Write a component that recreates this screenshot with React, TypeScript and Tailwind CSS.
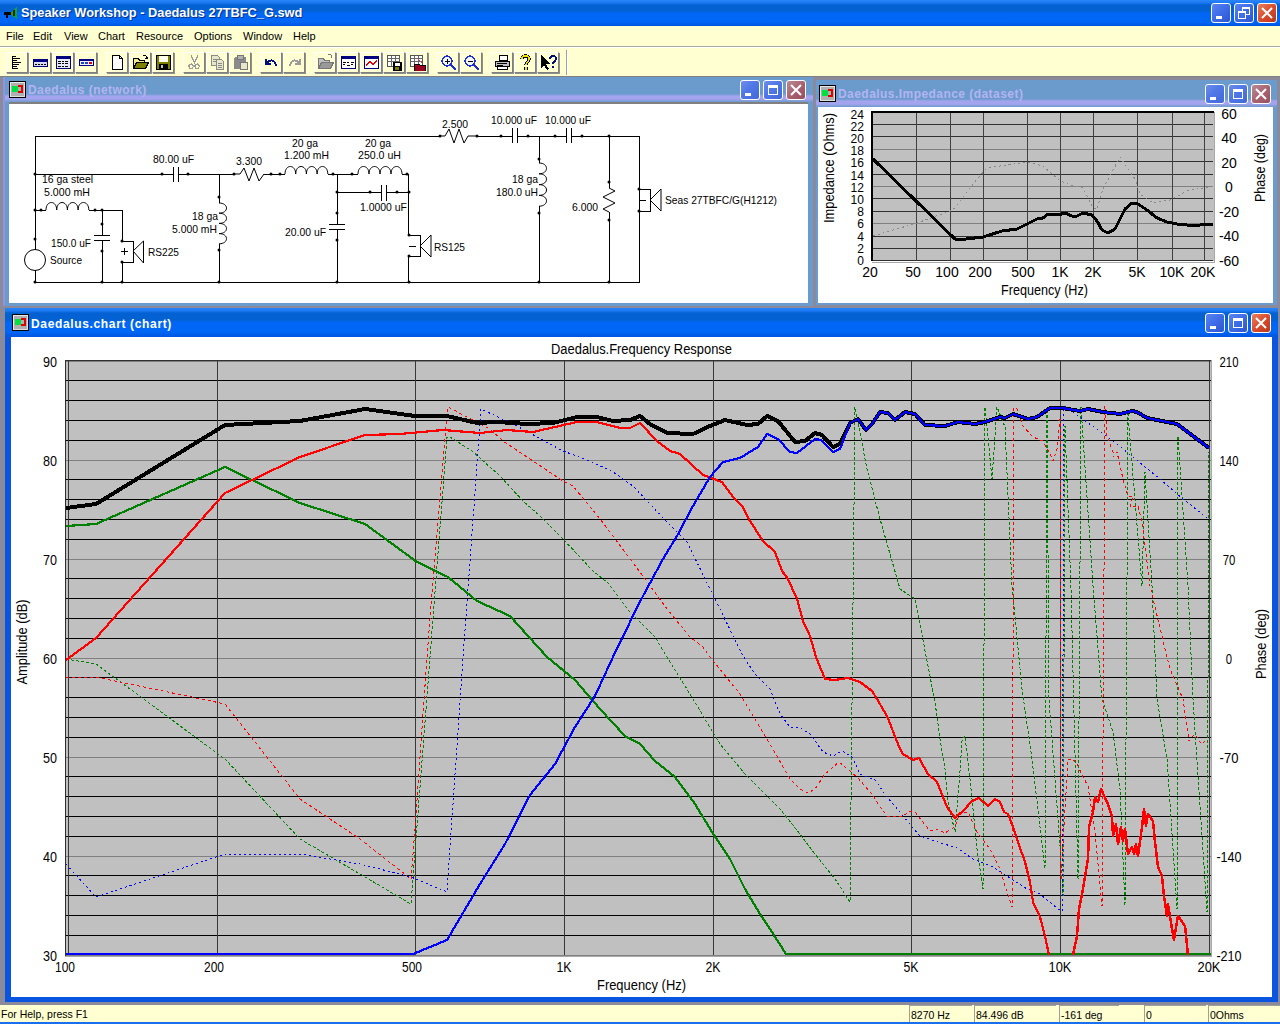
import React from "react";

type P = [number, number][];
const pts = (p: P) => p.map((a) => a.join(",")).join(" ");

function T({ x, y, w, s = 11, a = "start", r, c = "#000", children }: { x: number; y: number; w?: number; s?: number; a?: "start" | "middle" | "end"; r?: boolean; c?: string; children: string }) {
  return (
    <text
      x={r ? 0 : x}
      y={r ? 0 : y}
      transform={r ? `translate(${x},${y}) rotate(-90)` : undefined}
      fontSize={s}
      textAnchor={a}
      fill={c}
      textLength={w}
      lengthAdjust={w ? "spacingAndGlyphs" : undefined}
    >
      {children}
    </text>
  );
}

function Line({ p, c, w = 1, d }: { p: P; c: string; w?: number; d?: string }) {
  return <polyline points={pts(p)} fill="none" stroke={c} strokeWidth={w} strokeDasharray={d} strokeLinejoin="round" shapeRendering="crispEdges" />;
}

/* ------- window chrome ------- */
function CapBtn({ kind, active }: { kind: "min" | "max" | "rest" | "close"; active: boolean }) {
  const bg =
    kind === "close"
      ? active
        ? "bg-[linear-gradient(135deg,#e8805c,#d9482a_55%,#b5391f)]"
        : "bg-[linear-gradient(135deg,#b98a98,#a8606e_55%,#96505e)]"
      : active
        ? "bg-[linear-gradient(135deg,#5a84f0,#3f6ee8_45%,#2f55d0)]"
        : "bg-[linear-gradient(135deg,#6c8cec,#4f78e6_45%,#4468d8)]";
  return (
    <div className={`w-[20px] h-[20px] rounded-[3px] border border-white flex items-center justify-center shrink-0 ${bg}`}>
      <svg width="14" height="14" viewBox="0 0 14 14" shapeRendering="crispEdges">
        {kind === "min" && <rect x="2" y="10" width="6" height="3" fill="#fff" />}
        {kind === "max" && (
          <>
            <rect x="2.5" y="2.5" width="9" height="9" fill="none" stroke="#fff" />
            <rect x="2" y="2" width="10" height="3" fill="#fff" />
          </>
        )}
        {kind === "rest" && (
          <>
            <rect x="5.5" y="1.5" width="7" height="7" fill="none" stroke="#fff" />
            <rect x="5" y="1" width="8" height="2" fill="#fff" />
            <rect x="1.5" y="5.5" width="7" height="7" fill="#3f6ee8" stroke="#fff" />
            <rect x="1" y="5" width="8" height="2" fill="#fff" />
          </>
        )}
        {kind === "close" && <path d="M2 2 L12 12 M12 2 L2 12" stroke="#fff" strokeWidth="2" shapeRendering="auto" />}
      </svg>
    </div>
  );
}

function DocIcon() {
  return (
    <svg width="17" height="17" viewBox="0 0 17 17" className="shrink-0" shapeRendering="crispEdges">
      <rect x="0.5" y="0.5" width="16" height="16" fill="#c8c8c8" stroke="#000" />
      <rect x="1.5" y="1.5" width="14" height="14" fill="#b0b0b0" stroke="#fff" strokeWidth="0.6" />
      <rect x="3" y="5" width="6" height="6" fill="#00e040" />
      <path d="M9 5 H13 V11 H9" fill="none" stroke="#e00000" strokeWidth="1.5" />
    </svg>
  );
}

function Window({ title, active, shell, bar, client, barPad, track, children }: { title: string; active: boolean; shell: string; bar: string; client: string; barPad: string; track: string; children: React.ReactNode }) {
  return (
    <div className={`flex flex-col shrink-0 ${shell}`}>
      <div className={`flex items-center shrink-0 ${bar} ${barPad}`}>
        <DocIcon />
        <span className={`ml-[2px] flex-1 text-[12px] font-bold ${track} ${active ? "text-white" : "text-[#b4b4f2]"}`}>{title}</span>
        <div className="flex gap-[3px]">
          <CapBtn kind="min" active={active} />
          <CapBtn kind="max" active={active} />
          <CapBtn kind="close" active={active} />
        </div>
      </div>
      <div className={`flex-1 bg-white ${client}`}>{children}</div>
    </div>
  );
}

/* ------- toolbar icons ------- */
const D = "#000080";
const icons: Record<string, React.ReactNode> = {
  tree: <path d="M3.500 2v13M4 2h3M4 4h7M4 6h4M4 8h8M4 10h6M4 12h4M4 14h5" stroke="#000" fill="none" />,
  keys: (
    <>
      <rect x="1" y="5" width="15" height="8" fill={D} />
      <rect x="2" y="8" width="13" height="4" fill="#d8d8f0" />
      <path d="M3 10h2M6 10h2M9 10h2M12 10h2" stroke="#000" />
    </>
  ),
  grid: (
    <>
      <rect x="1" y="2" width="15" height="13" fill={D} />
      <rect x="2" y="5" width="13" height="9" fill="#e8e8f8" />
      <path d="M3 7h3M7 7h2M10 7h3M3 9h3M7 9h2M10 9h3M3 12h3M7 12h2M10 12h3" stroke="#000" />
    </>
  ),
  bars: (
    <>
      <rect x="1.500" y="5.500" width="14" height="6" fill="#f0f0f8" stroke={D} />
      <rect x="1" y="5" width="15" height="2" fill={D} />
      <rect x="3" y="8" width="3" height="2" fill="#2040d0" />
      <rect x="7" y="8" width="3" height="2" fill="#2040d0" />
      <rect x="11" y="8" width="3" height="2" fill="#e00000" />
    </>
  ),
  newdoc: <path d="M3.500 1.500h7l3 3v11h-10zM10.500 1.500v3h3" fill="#fff" stroke="#000" />,
  open: (
    <>
      <path d="M1.500 4.500h5l1 2h5v8h-11z" fill="#f0e890" stroke="#000" />
      <path d="M1.500 14.500l3-6h12l-3 6z" fill="#808000" stroke="#000" />
      <path d="M11 2c2-1 4 0 4 3M15 5l-2-1M15 5l1-2" stroke="#000" fill="none" />
    </>
  ),
  save: (
    <>
      <rect x="1.500" y="1.500" width="14" height="14" fill="#808000" stroke="#000" />
      <rect x="4" y="2" width="9" height="6" fill="#fffff0" />
      <rect x="4" y="10" width="9" height="5" fill="#000" />
      <rect x="6" y="11" width="2" height="3" fill="#c0c0c0" />
    </>
  ),
  cut: <path d="M5 1l4 9M12 1l-4 9M5 10a2.200 2.200 0 1 0 .1 0M11 10a2.200 2.200 0 1 0 .1 0" stroke="#9a9a9a" fill="none" strokeWidth="1.2" />,
  copy: (
    <>
      <path d="M2.500 1.500h6l2 2v8h-8z" fill="#e8e8c8" stroke="#8a8a8a" />
      <path d="M7.500 5.500h5l2 2v8h-7z" fill="#e8e8c8" stroke="#8a8a8a" />
      <path d="M4 5h4M4 7h3M9 9h4M9 11h4M9 13h4" stroke="#8a8a8a" />
    </>
  ),
  paste: (
    <>
      <rect x="2" y="3" width="12" height="12" rx="2" fill="#8a8a8a" />
      <rect x="5" y="1" width="6" height="4" fill="#b0b0b0" stroke="#777" />
      <rect x="8" y="8" width="7" height="7" fill="#e8e8c8" stroke="#777" />
    </>
  ),
  undo: <path d="M3 5v5h5M3 10C6 5 12 5 13 12" stroke="#00107a" strokeWidth="2" fill="none" />,
  redo: <path d="M14 5v5h-5M14 10C11 5 5 5 4 12" stroke="#9a9a9a" strokeWidth="2" fill="none" />,
  open2: (
    <>
      <path d="M1.500 4.500h5l1 2h5v8h-11z" fill="#c0c0c0" stroke="#777" />
      <path d="M1.500 14.500l3-6h12l-3 6z" fill="#999" stroke="#777" />
      <path d="M11 1c2-1 4 0 4 3" stroke="#777" fill="none" />
    </>
  ),
  prefs: (
    <>
      <rect x="1" y="2" width="15" height="13" fill={D} />
      <rect x="2" y="5" width="13" height="9" fill="#fff" />
      <path d="M3 8h3M3 10h2M7 8h2M7 11h3M11 8h3M11 10h2" stroke="#000" />
    </>
  ),
  wave: (
    <>
      <rect x="1" y="2" width="15" height="13" fill={D} />
      <rect x="2" y="5" width="13" height="9" fill="#fff" />
      <path d="M3 12l4-5 3 4 4-5" stroke="#e00000" fill="none" strokeWidth="1.2" />
    </>
  ),
  tsave: (
    <>
      <rect x="1.500" y="1.500" width="12" height="11" fill="#fff" stroke="#555" />
      <path d="M1 4h13M5 2v10M9 2v10M2 7h11" stroke="#666" />
      <rect x="7" y="8" width="9" height="9" fill="#000" />
      <rect x="9" y="9" width="5" height="3" fill="#fff" />
      <rect x="9" y="13" width="4" height="3" fill="#808000" />
    </>
  ),
  tfold: (
    <>
      <rect x="1.500" y="1.500" width="12" height="11" fill="#fff" stroke="#555" />
      <path d="M1 4h13M5 2v10M9 2v10M2 7h11" stroke="#666" />
      <path d="M5 10h5l1 1h5v6h-11z" fill="#a00020" stroke="#000" />
      <path d="M8 4l5 5" stroke="#e04060" />
    </>
  ),
  zin: (
    <>
      <circle cx="7" cy="7" r="5" fill="#f4f4ff" stroke="#2030d0" strokeWidth="1.4" />
      <path d="M4.500 7h5M7 4.500v5" stroke="#000" />
      <path d="M11 11l5 5" stroke="#2030d0" strokeWidth="2" />
    </>
  ),
  zout: (
    <>
      <circle cx="7" cy="7" r="5" fill="#f4f4ff" stroke="#2030d0" strokeWidth="1.4" />
      <path d="M4.500 7h5" stroke="#000" />
      <path d="M11 11l5 5" stroke="#2030d0" strokeWidth="2" />
    </>
  ),
  print: (
    <>
      <path d="M5.500 1.500h8v5h-8z" fill="#fff" stroke="#000" />
      <path d="M1.500 7.500h14v5h-14z" fill="#c0c0c0" stroke="#000" />
      <path d="M3.500 12.500h10v3h-10z" fill="#fff" stroke="#000" />
      <path d="M3 9h10M3 11h6" stroke="#000" />
    </>
  ),
  help: <path d="M5 5c0-4 7-4 7 0 0 3-3 3-3 6M9 13v3" stroke="#000" strokeWidth="3.4" fill="none" />,
  helpy: <path d="M5 5c0-4 7-4 7 0 0 3-3 3-3 6M9 13v3" stroke="#f0e000" strokeWidth="1.6" fill="none" />,
  arrow: (
    <>
      <path d="M1 1v13l3-3 3 5 2-1-3-5h4z" fill="#000" />
      <path d="M10 5c0-4 6-4 6 0 0 2-3 2-3 5M13 12v2" stroke="#00107a" strokeWidth="2" fill="none" />
    </>
  ),
};

function TB({ i }: { i: React.ReactNode }) {
  return (
    <div className="w-[22px] h-[21px] shrink-0 flex items-center justify-center border border-t-white border-l-white border-r-[#808080] border-b-[#808080] shadow-[1px_1px_0_#909088]">
      <svg width="17" height="17" viewBox="0 0 17 17" shapeRendering="crispEdges">
        {i}
      </svg>
    </div>
  );
}

function Toolbar() {
  const groups: React.ReactNode[][] = [
    [icons.tree, icons.keys, icons.grid, icons.bars],
    [icons.newdoc, icons.open, icons.save],
    [icons.cut, icons.copy, icons.paste],
    [icons.undo, icons.redo],
    [icons.open2, icons.prefs, icons.wave, icons.tsave, icons.tfold],
    [icons.zin, icons.zout],
    [icons.print, <>{icons.help}{icons.helpy}</>, icons.arrow],
  ];
  return (
    <div className="h-[28px] shrink-0 flex items-start pt-[4px] pl-[6px] bg-[#ffffd1]">
      <div className="flex gap-[9px]">
        {groups.map((g, n) => (
          <div key={n} className="flex gap-[1px]">
            {g.map((i, k) => (
              <TB key={k} i={i} />
            ))}
          </div>
        ))}
      </div>
      <div className="ml-[7px] -mt-[2px] w-[2px] h-[25px] border-l border-[#a0a0a0] bg-white" />
    </div>
  );
}

/* ------- circuit ------- */
const W = (d: string) => <path d={d} fill="none" stroke="#000" strokeWidth="1" shapeRendering="crispEdges" />;

function hCoil(x: number, y: number, n: number, step: number) {
  let d = `M${x} ${y}`;
  for (let i = 0; i < n; i++) d += ` c0 -10 ${step} -10 ${step} 0`;
  return <path d={d} fill="none" stroke="#000" />;
}
function vCoil(x: number, y: number, n: number, step: number) {
  let d = `M${x} ${y}`;
  for (let i = 0; i < n; i++) d += ` c10 0 10 ${step} 0 ${step}`;
  return <path d={d} fill="none" stroke="#000" />;
}

const dots: P = [
  [35, 174], [35, 210], [35, 239], [35, 282], [41, 210], [95, 210], [102, 210], [102, 224], [102, 251], [102, 282], [122, 241], [122, 262], [122, 282],
  [162, 174], [188, 174], [219, 197], [219, 250], [219, 282], [234, 174], [271, 174], [280, 174], [333, 174], [352, 174], [407, 174],
  [337, 192], [337, 213], [337, 240], [337, 282], [370, 192], [397, 192], [409, 192], [409, 235], [409, 256], [409, 282],
  [440, 136], [477, 136], [501, 136], [528, 136], [555, 136], [582, 136], [609, 136], [539, 159], [539, 213], [539, 282],
  [609, 182], [609, 220], [609, 282], [639, 189], [639, 211],
];

function Circuit() {
  return (
    <svg width="799" height="199" viewBox="9 104 799 199" className="block overflow-visible">
      {W("M35 136H440M477 136H512M517 136H566M571 136H639V282H35V136M35 250V136M35 174H173M178 174H234M264 174H285M328 174H358M402 174H408V235M337 174V224M337 229V282M337 192H381M386 192H409")}
      {W("M35 210H46M89 210H122V241H133V262H122V282M102 210V235M102 240V282")}
      {W("M219 174V203M219 244V282M539 136V163M539 206V282M609 136V188M609 212V282")}
      {W("M408 235H420V256H408V282M639 189H650V211H639")}
      {/* capacitor plates */}
      {W("M173 167V182M178 167V182M512 128V143M517 128V143M566 128V143M571 128V143M381 185V201M386 185V201M329 224H345M329 229H345M94 235H110M94 240H110")}
      {/* resistors */}
      <path d="M234 174 l6 -0 l4 -6 l5 13 l5 -13 l5 13 l5 -7" fill="none" stroke="#000" />
      <path d="M440 136 h5 l4 -7 l5 14 l5 -14 l5 14 l4 -7 h9" fill="none" stroke="#000" />
      <path d="M609 188 l6 3 l-12 6 l12 6 l-12 6 l6 3" fill="none" stroke="#000" />
      {hCoil(46, 210, 4, 10.700)}
      {hCoil(285, 174, 4, 10.700)}
      {hCoil(358, 174, 4, 11)}
      {vCoil(219, 203, 4, 10.200)}
      {vCoil(539, 163, 4, 10.800)}
      {/* source */}
      <circle cx="35" cy="260" r="10.500" fill="#fff" stroke="#000" />
      {/* drivers */}
      <path d="M133 251L143.500 241V263Z" fill="#fff" stroke="#000" />
      <path d="M420 246L431 235V257Z" fill="#fff" stroke="#000" />
      <path d="M650 200L661 189V211Z" fill="#fff" stroke="#000" />
      {W("M121 251H128M124.500 248V255M409 246H416M639 200H646")}
      {dots.map((d, i) => (
        <circle key={i} cx={d[0]} cy={d[1]} r="1.500" fill="#000" />
      ))}
      <T x={42} y={183} w={51}>16 ga steel</T>
      <T x={44} y={196} w={46}>5.000 mH</T>
      <T x={51} y={247} w={40}>150.0 uF</T>
      <T x={50} y={264} w={32}>Source</T>
      <T x={148} y={256} w={31}>RS225</T>
      <T x={153} y={163} w={41}>80.00 uF</T>
      <T x={236} y={165} w={26}>3.300</T>
      <T x={292} y={147} w={26}>20 ga</T>
      <T x={284} y={159} w={45}>1.200 mH</T>
      <T x={365} y={147} w={26}>20 ga</T>
      <T x={358} y={159} w={43}>250.0 uH</T>
      <T x={360} y={211} w={47}>1.0000 uF</T>
      <T x={192} y={220} w={26}>18 ga</T>
      <T x={172} y={233} w={45}>5.000 mH</T>
      <T x={285} y={236} w={41}>20.00 uF</T>
      <T x={434} y={251} w={31}>RS125</T>
      <T x={442} y={128} w={26}>2.500</T>
      <T x={491} y={124} w={46}>10.000 uF</T>
      <T x={545} y={124} w={46}>10.000 uF</T>
      <T x={512} y={183} w={26}>18 ga</T>
      <T x={496} y={196} w={42}>180.0 uH</T>
      <T x={572} y={211} w={26}>6.000</T>
      <T x={665} y={204} w={112}>Seas 27TBFC/G(H1212)</T>
    </svg>
  );
}

/* ------- impedance chart ------- */
const impBlack: P = [[873,159],[955,239],[958,240],[983,237],[1002,231],[1017,229],[1027,224],[1037,219],[1043,218],[1048,214],[1058,215],[1065,213],[1072,216],[1077,216],[1083,213],[1092,215],[1097,221],[1102,230],[1108,233],[1115,229],[1120,219],[1125,209],[1132,203],[1138,204],[1147,210],[1157,218],[1167,222],[1177,224],[1187,225],[1200,225],[1207,224],[1213,225]];
const impGray: P = [[873,236],[917,223],[953,210],[977,179],[987,168],[1027,162],[1043,166],[1060,181],[1073,186],[1083,188],[1093,208],[1097,209],[1103,189],[1120,157],[1135,179],[1140,194],[1153,203],[1170,200],[1187,191],[1213,186]];

function Impedance() {
  const left = ["24","22","20","18","16","14","12","10","8","6","4","2","0"];
  const right = ["60","40","20","0","-20","-40","-60"];
  const bottom: [string, number][] = [["20",870],["50",913],["100",947],["200",980],["500",1023],["1K",1060],["2K",1093],["5K",1137],["10K",1172],["20K",1203]];
  return (
    <svg width="455" height="196" viewBox="818 107 455 196" className="block overflow-visible">
      <rect x="872" y="112" width="342" height="149" fill="#c0c0c0" />
      {Array.from({ length: 13 }).map((_, i) => (
        <line key={i} x1="872" x2="1213" y1={112 + i * 12.4} y2={112 + i * 12.4} stroke={i % 3 === 0 && i > 0 && i < 12 ? "#808080" : "#303030"} shapeRendering="crispEdges" />
      ))}
      {[916,950,983,1027,1060,1093,1137,1172,1204].map((x) => (
        <line key={x} x1={x} x2={x} y1="112" y2="261" stroke="#404040" shapeRendering="crispEdges" />
      ))}
      <Line p={impGray} c="#888" d="2 3" />
      <Line p={impBlack} c="#000" w={3} />
      <path d="M872 261V112H1214" fill="none" stroke="#000" strokeWidth="2" shapeRendering="crispEdges" />
      <path d="M1214 112V262H872" fill="none" stroke="#a8a8a8" shapeRendering="crispEdges" />
      {left.map((t, i) => (
        <T key={t} x={864} y={118.500 + i * 12.2} a="end" s={13} w={t.length * 6.7}>{t}</T>
      ))}
      {right.map((t, i) => (
        <T key={t} x={1229} y={118.500 + i * 24.5} a="middle" s={14}>{t}</T>
      ))}
      {bottom.map(([t, x]) => (
        <T key={t} x={x} y={277} a="middle" s={14}>{t}</T>
      ))}
      <T x={1044.500} y={295} a="middle" s={14} w={87}>Frequency (Hz)</T>
      <T x={834} y={168} a="middle" s={14} r w={110}>Impedance (Ohms)</T>
      <T x={1265} y={168} a="middle" s={14} r w={68}>Phase (deg)</T>
    </svg>
  );
}

/* ------- main chart ------- */
const black: P = [[66,509],[96,505],[225,426],[300,422],[365,410],[415,417],[447,417],[477,424],[497,423],[527,425],[553,424],[577,418],[597,418],[613,422],[630,421],[640,417],[650,425],[667,434],[693,435],[710,427],[725,421],[747,426],[758,425],[767,417],[778,422],[795,443],[805,442],[815,434],[822,436],[833,448],[840,445],[850,424],[858,420],[866,431],[872,425],[880,413],[888,414],[895,421],[905,413],[915,415],[925,426],[945,427],[958,423],[975,425],[985,423],[1000,418],[1005,419],[1013,415],[1028,420],[1037,418],[1050,409],[1062,409],[1080,412],[1088,410],[1103,413],[1120,415],[1132,412],[1137,413],[1147,419],[1177,425],[1193,437],[1209,449]];
const blue: P = [[66,955],[413,955],[447,941],[480,885],[505,845],[530,796],[555,765],[575,728],[595,697],[613,658],[630,623],[643,597],[663,560],[677,537],[693,507],[710,478],[723,463],[740,459],[758,448],[767,435],[778,440],[790,453],[797,454],[815,440],[821,441],[833,453],[840,450],[850,424],[858,420],[866,431],[872,425],[880,413],[888,414],[895,421],[905,413],[915,415],[925,426],[945,427],[958,423],[975,425],[985,423],[1000,418],[1005,419],[1013,415],[1028,420],[1037,418],[1050,409],[1062,409],[1080,412],[1088,410],[1103,413],[1120,415],[1132,412],[1137,413],[1147,419],[1177,425],[1193,437],[1209,449]];
const red: P = [[66,661],[96,639],[225,494],[300,458],[365,436],[400,435],[443,431],[480,434],[507,431],[533,433],[577,423],[597,423],[620,429],[630,429],[640,424],[657,442],[670,452],[680,455],[703,476],[722,483],[733,498],[742,507],[750,522],[763,542],[775,553],[782,572],[788,580],[797,600],[803,622],[810,637],[816,658],[825,680],[835,681],[848,679],[860,683],[872,692],[877,700],[887,717],[900,750],[903,755],[913,761],[919,759],[928,775],[937,783],[947,808],[955,819],[963,812],[972,802],[979,799],[988,807],[995,800],[1000,803],[1004,813],[1008,815],[1013,828],[1018,843],[1025,863],[1030,883],[1033,903],[1040,918],[1045,937],[1049,956]];
const red2: P = [[1073,956],[1077,937],[1079,910],[1083,890],[1088,860],[1089,828],[1093,813],[1095,798],[1098,803],[1101,790],[1107,803],[1112,817],[1113,837],[1116,825],[1118,845],[1121,828],[1123,842],[1125,830],[1128,855],[1132,848],[1134,855],[1136,845],[1138,857],[1142,828],[1144,810],[1146,827],[1148,815],[1153,822],[1155,843],[1158,868],[1162,877],[1164,897],[1167,917],[1168,905],[1172,930],[1174,941],[1178,917],[1185,927],[1188,956]];
const green: P = [[66,527],[96,525],[225,468],[300,504],[365,525],[417,563],[448,578],[477,602],[510,617],[547,658],[575,681],[600,710],[625,737],[640,745],[655,762],[675,778],[695,805],[712,833],[730,860],[745,890],[760,915],[770,930],[786,955],[1211,955]];
const dRed: P = [[66,678],[96,678],[225,705],[300,800],[360,840],[411,880],[415,830],[427,658],[435,557],[445,438],[448,408],[490,430],[503,442],[563,482],[573,487],[600,520],[640,573],[667,610],[690,638],[703,648],[710,658],[740,695],[770,745],[790,780],[800,790],[808,794],[815,790],[825,775],[839,763],[857,778],[872,795],[880,808],[888,818],[903,817],[910,812],[915,813],[930,832],[937,830],[945,834],[955,828],[960,813],[968,813],[977,833],[990,850],[1000,870],[1007,893],[1012,908],[1014,408],[1017,410],[1023,427],[1033,438],[1043,442],[1050,455],[1053,462],[1057,450],[1060,420],[1061,880],[1068,760],[1073,760],[1078,767],[1083,778],[1088,787],[1095,833],[1102,907],[1105,407],[1107,437],[1113,453],[1113,458],[1117,453],[1123,480],[1128,497],[1133,497],[1130,508],[1138,507],[1142,523],[1150,587],[1165,650],[1170,670],[1183,700],[1189,742],[1195,735],[1201,745],[1208,740]];
const dBlue: P = [[66,865],[96,898],[225,855],[300,855],[360,865],[411,878],[447,893],[463,658],[470,563],[475,493],[481,410],[513,425],[563,452],[590,462],[613,473],[633,487],[667,523],[687,543],[710,590],[743,657],[755,675],[770,690],[780,715],[790,728],[800,729],[810,735],[823,753],[833,757],[842,752],[852,758],[860,775],[875,781],[887,798],[900,813],[912,828],[920,837],[938,843],[957,849],[973,860],[993,868],[1007,877],[1027,890],[1040,895],[1058,910],[1062,912],[1064,407],[1080,418],[1113,442],[1133,458],[1160,480],[1177,495],[1207,519]];
const dGreen: P = [[66,660],[96,665],[225,760],[300,840],[360,875],[411,905],[430,658],[447,438],[450,438],[472,452],[500,477],[523,502],[540,517],[563,540],[593,572],[608,584],[630,613],[655,638],[667,658],[690,695],[720,745],[745,775],[780,810],[800,835],[815,855],[835,880],[850,903],[855,408],[867,470],[880,520],[900,590],[915,600],[935,703],[940,740],[945,770],[948,803],[955,833],[960,772],[962,742],[965,737],[970,780],[977,850],[983,890],[985,408],[992,480],[997,408],[1005,428],[1012,587],[1022,690],[1032,760],[1045,870],[1047,410],[1049,700],[1060,847],[1063,897],[1065,427],[1071,590],[1078,880],[1081,408],[1093,587],[1102,700],[1113,733],[1120,790],[1125,907],[1128,415],[1142,587],[1145,473],[1152,587],[1157,700],[1167,760],[1177,910],[1178,437],[1188,587],[1193,700],[1207,913],[1209,453]];

function MainChart() {
  const left = ["90","80","70","60","50","40","30"];
  const right = ["210","140","70","0","-70","-140","-210"];
  const bottom: [string, number][] = [["100",65],["200",214],["500",412],["1K",564],["2K",713],["5K",911],["10K",1060],["20K",1209]];
  return (
    <svg width="1261" height="660" viewBox="11 338 1261 660" className="block">
      <defs>
        <clipPath id="plot">
          <rect x="66" y="362" width="1145" height="594" />
        </clipPath>
      </defs>
      <rect x="66" y="362" width="1145" height="594" fill="#c0c0c0" />
      {Array.from({ length: 31 }).map((_, i) => (
        <line key={i} x1="66" x2="1211" y1={362 + i * 19.8} y2={362 + i * 19.8} stroke={i % 5 === 0 ? "#808080" : "#000"} shapeRendering="crispEdges" />
      ))}
      {[68,217,415,564,713,911,1060,1209].map((x) => (
        <line key={x} x1={x} x2={x} y1="362" y2="956" stroke="#383838" shapeRendering="crispEdges" />
      ))}
      <g clipPath="url(#plot)">
        <Line p={dGreen} c="#008000" d="3 2" />
        <Line p={dRed} c="#ff0000" d="3 3" />
        <Line p={dBlue} c="#0000ff" d="2 3" />
        <Line p={black} c="#000" w={4} />
        <Line p={green} c="#008000" w={2.200} />
        <Line p={red} c="#ff0000" w={2.200} />
        <Line p={red2} c="#ff0000" w={2.500} />
        <Line p={blue} c="#0000ff" w={2.200} />
      </g>
      <path d="M65.500 957V361.500H1211" fill="none" stroke="#303030" shapeRendering="crispEdges" />
      <path d="M1211.500 361V957H65" fill="none" stroke="#a8a8a8" shapeRendering="crispEdges" />
      {left.map((t, i) => (
        <T key={t} x={57} y={367.500 + i * 99} a="end" s={15} w={14}>{t}</T>
      ))}
      {right.map((t, i) => {
        const w = t.length * 6.3;
        return <T key={t} x={1229} y={367.500 + i * 99} a="middle" s={15} w={w}>{t}</T>;
      })}
      {bottom.map(([t, x]) => (
        <T key={t} x={x} y={973} a="middle" s={15} w={t.endsWith("K") ? (t.length === 2 ? 15 : 23) : 20}>{t}</T>
      ))}
      <T x={641.500} y={355} a="middle" s={14} w={181}>Daedalus.Frequency Response</T>
      <T x={641.500} y={991} a="middle" s={14} w={89}>Frequency (Hz)</T>
      <T x={27} y={643} a="middle" s={14} r w={85}>Amplitude (dB)</T>
      <T x={1266} y={645} a="middle" s={14} r w={70}>Phase (deg)</T>
    </svg>
  );
}

/* ------- page ------- */
export default function App() {
  const menu: [string, string][] = [
    ["File", "w-[27px]"],
    ["Edit", "w-[31px]"],
    ["View", "w-[34px]"],
    ["Chart", "w-[38px]"],
    ["Resource", "w-[58px]"],
    ["Options", "w-[49px]"],
    ["Window", "w-[50px]"],
    ["Help", "w-[30px]"],
  ];
  const cells: [string, string][] = [
    ["8270 Hz", "w-[63px] mr-[2px]"],
    ["84.496 dB", "w-[82px] mr-[3px]"],
    ["-161 deg", "w-[60px] mr-[25px]"],
    ["0", "w-[62px] mr-[2px]"],
    ["0Ohms", "w-[72px]"],
  ];
  return (
    <div className="w-[1280px] h-[1024px] overflow-hidden flex flex-col bg-[#ffffd1] font-['Liberation_Sans',Arial,sans-serif] text-black">
      {/* application title bar */}
      <div className="h-[26px] shrink-0 flex items-center pl-[3px] pr-[3px] bg-[linear-gradient(180deg,#2a85f8_0px,#1a78f2_3px,#0461d2_5px,#0461d2_11px,#0066f5_13px,#0066f5_22px,#0055e0_26px)]">
        <svg width="16" height="16" viewBox="0 0 16 16" className="shrink-0" shapeRendering="crispEdges">
          <path d="M8 7L14 1V14L8 10Z" fill="#10a040" />
          <rect x="1" y="7" width="7" height="3" fill="#000" />
          <rect x="3" y="9" width="2" height="4" fill="#000" />
          <rect x="10" y="5" width="2" height="6" fill="#003000" />
        </svg>
        <span className="ml-[2px] flex-1 text-[12.8px] font-bold text-white [text-shadow:1px_1px_0_#003090]">Speaker Workshop - Daedalus 27TBFC_G.swd</span>
        <div className="flex gap-[3px]">
          <CapBtn kind="min" active />
          <CapBtn kind="rest" active />
          <CapBtn kind="close" active />
        </div>
      </div>

      {/* menu */}
      <div className="h-[20px] shrink-0 flex items-center pl-[6px] text-[11px] bg-[#ffffd1]">
        {menu.map(([m, w]) => (
          <span key={m} className={`shrink-0 ${w}`}>{m}</span>
        ))}
      </div>
      <div className="h-[2px] shrink-0 border-t border-[#a8a8a0] bg-white" />

      <Toolbar />

      {/* MDI client */}
      <div className="flex-1 min-h-0 flex flex-col bg-[#8a8a9a] border-t border-[#808080]">
        <div className="h-[231px] shrink-0 flex items-start">
          <Window
            title="Daedalus (network)"
            active={false}
            shell="ml-[3px] w-[810px] h-[229px] bg-[#6b9bcc] border-l-2 border-[#8f93e0]"
            bar="h-[25px] bg-[linear-gradient(180deg,#6b9bcc_0px,#6b9bcc_17px,#a3a3ee_19px,#a3a3ee_22px,#6b9bcc_25px)]"
            barPad="pl-[4px] pr-[7px]"
            track="tracking-[0.45px] pt-[1px]"
            client="ml-[4px] mr-[5px] mb-[3px] border-t-2 border-[#808080]"
          >
            <Circuit />
          </Window>
          <Window
            title="Daedalus.Impedance (dataset)"
            active={false}
            shell="ml-[3px] mt-[3px] w-[461px] h-[225px] bg-[#6b9bcc]"
            bar="h-[27px] bg-[linear-gradient(180deg,#6b9bcc_0px,#6b9bcc_19px,#a3a3ee_21px,#a3a3ee_24px,#6b9bcc_27px)]"
            barPad="pl-[3px] pr-[6px]"
            track="tracking-[0.45px]"
            client="ml-[2px] mr-[4px] mb-[2px]"
          >
            <Impedance />
          </Window>
        </div>
        <Window
          title="Daedalus.chart (chart)"
          active
          shell="ml-[5px] w-[1273px] h-[694px] bg-[#0a55e0]"
          bar="h-[29px] bg-[linear-gradient(180deg,#2a85f8_0px,#1a78f2_3px,#0461d2_5px,#0461d2_12px,#0066f5_14px,#0066f5_24px,#0055e0_29px)]"
          barPad="pl-[7px] pr-[7px]"
          track="tracking-[0.65px] pt-[2px]"
          client="ml-[6px] mr-[6px] mb-[5px]"
        >
          <MainChart />
        </Window>
      </div>

      {/* status bar */}
      <div className="h-[17px] shrink-0 flex items-stretch bg-[#ffffd1] text-[10.5px]">
        <span className="w-[909px] shrink-0 pl-[1px] pt-[3px] leading-[13px]">For Help, press F1</span>
        {cells.map(([t, w]) => (
          <span key={t} className={`shrink-0 pl-[1px] pt-[3px] leading-[13px] border-t border-l border-[#a0a098] ${w}`}>{t}</span>
        ))}
      </div>
      <div className="h-[2px] shrink-0 bg-[#1a6ef0]" />
    </div>
  );
}
